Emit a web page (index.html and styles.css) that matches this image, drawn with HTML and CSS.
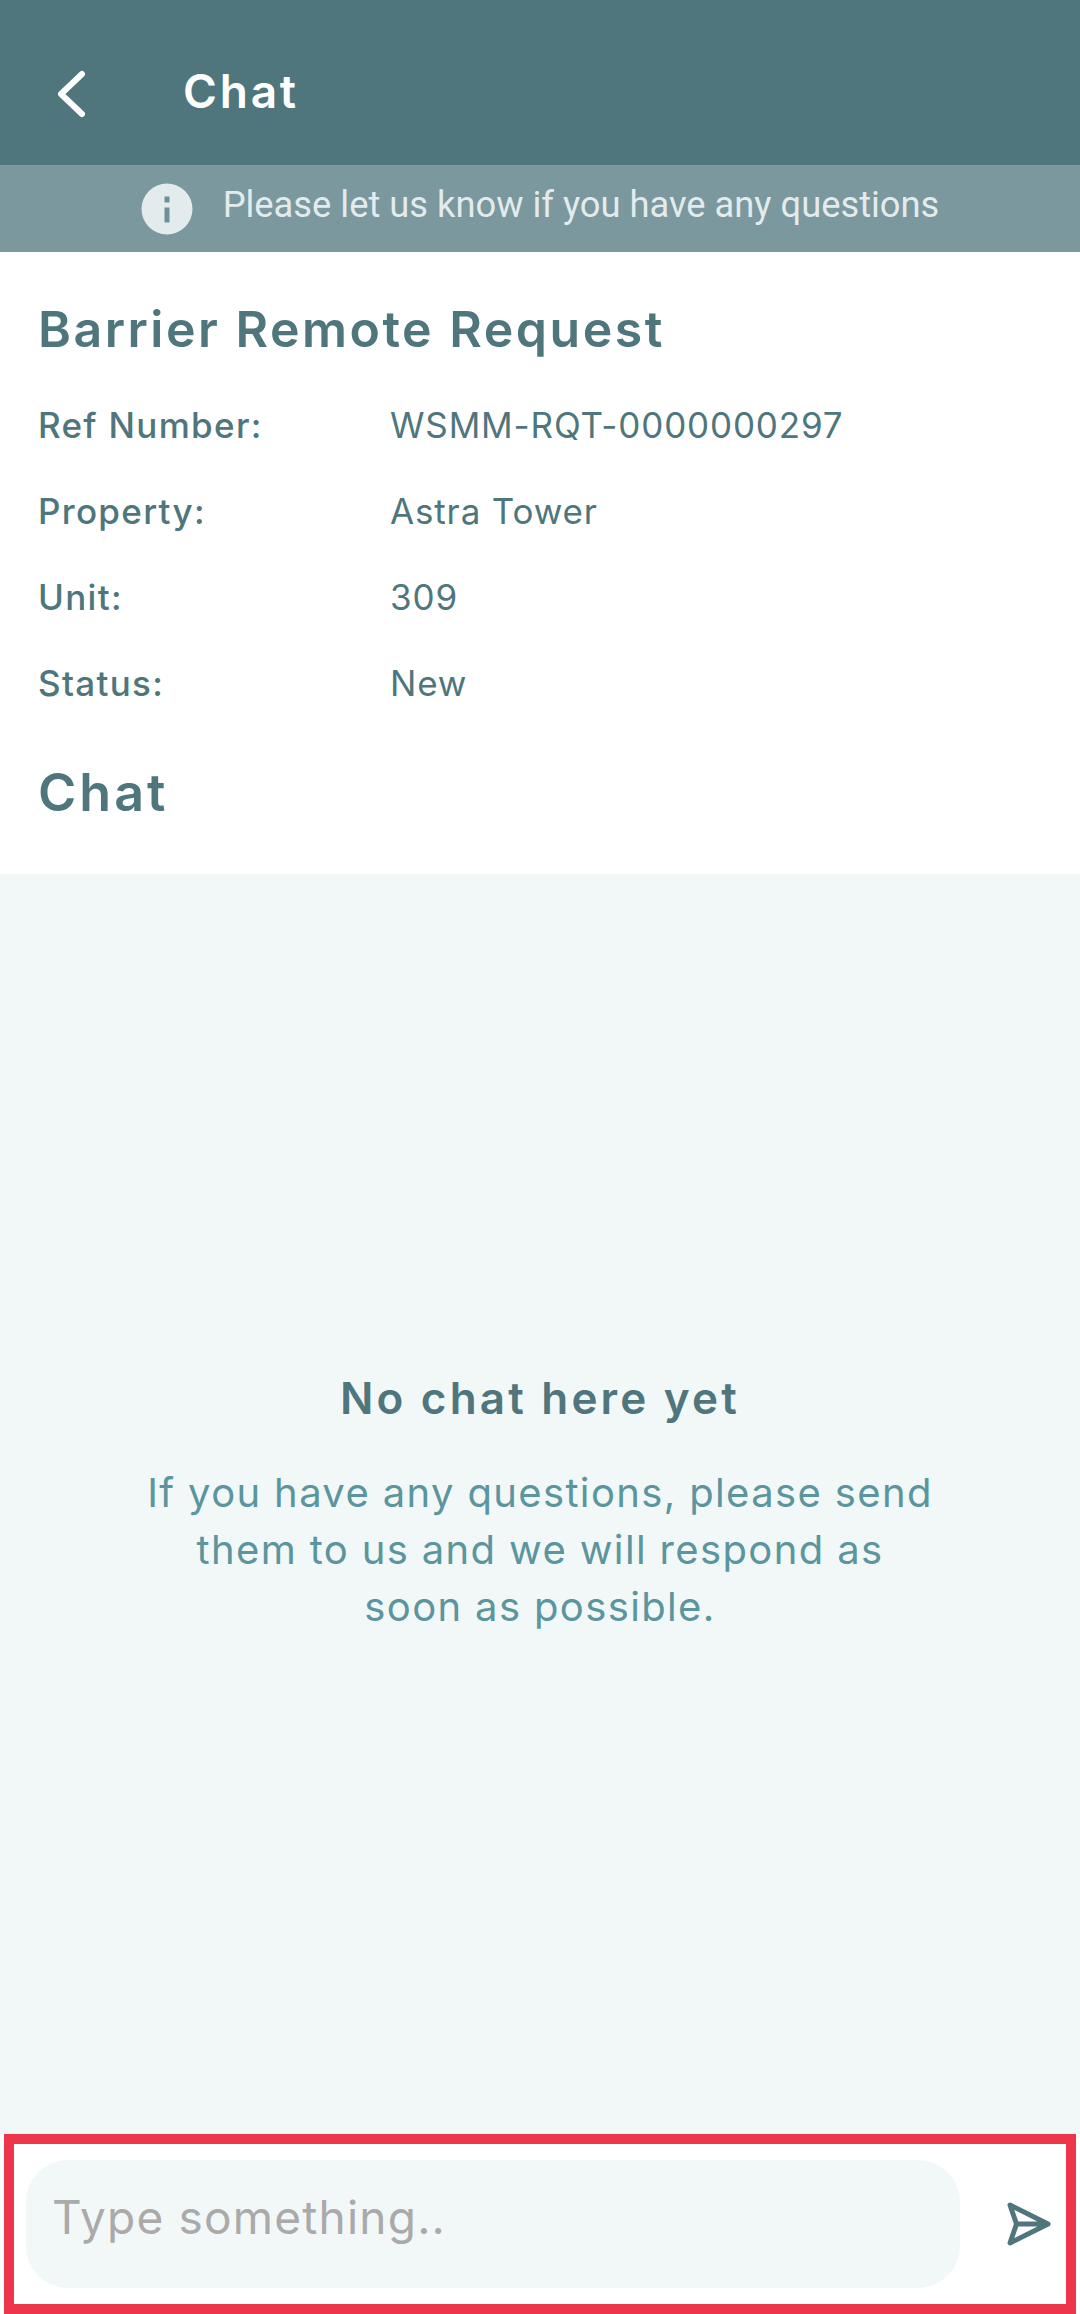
FILE: index.html
```html
<!DOCTYPE html>
<html lang="en">
<head>
    <title>Chat</title>
    <meta charset="UTF-8">
    <meta name="viewport" content="width=device-width, initial-scale=1.0">
    <link rel="stylesheet" href="styles.css">
</head>

<body>
    <div class="chat-page">
        <header class="top-bar">
            <svg class="back-icon" width="32" height="48" viewBox="0 0 32 48">
                <path d="M27 4 L6 24 L27 44" fill="none" stroke="#fff" stroke-width="6" stroke-linecap="round" stroke-linejoin="round"/>
            </svg>
            <h1>Chat</h1>
        </header>

        <div class="notice-bar">
            <svg class="info-icon" width="52" height="52" viewBox="0 0 52 52">
                <circle cx="26" cy="26" r="25.5" fill="#e4ebec"/>
                <rect x="23.5" y="13.5" width="5" height="6" fill="#6f9096"/>
                <rect x="23.5" y="24.5" width="5" height="15" fill="#6f9096"/>
            </svg>
            <p>Please let us know if you have any questions</p>
        </div>

        <section class="request-info">
            <h2>Barrier Remote Request</h2>
            <div class="info-row">
                <span class="info-label">Ref Number:</span>
                <span class="info-value">WSMM-RQT-0000000297</span>
            </div>
            <div class="info-row">
                <span class="info-label">Property:</span>
                <span class="info-value">Astra Tower</span>
            </div>
            <div class="info-row">
                <span class="info-label">Unit:</span>
                <span class="info-value">309</span>
            </div>
            <div class="info-row">
                <span class="info-label">Status:</span>
                <span class="info-value">New</span>
            </div>
            <h2 class="chat-title">Chat</h2>
        </section>

        <section class="empty-chat">
            <h3>No chat here yet</h3>
            <p>If you have any questions, please send them to us and we will respond as soon as possible.</p>
        </section>

        <footer class="message-bar">
            <div class="message-input">Type something..</div>
            <svg class="send-icon" width="44" height="44" viewBox="0 0 44 44">
                <path d="M3 3 L41 22 L3 41 L9.5 22 Z M9.5 22 H41" fill="none" stroke="#4f767c" stroke-width="5" stroke-linejoin="round" stroke-linecap="round"/>
            </svg>
        </footer>
    </div>
</body>

</html>
```

FILE: styles.css
```css
body {
    font-family: 'Inter', 'Noto Sans', sans-serif;
    margin: 0;
    padding: 0;
    background-color: #fff;
}

.chat-page {
    display: flex;
    flex-direction: column;
    height: 2314px;
}

.top-bar {
    display: flex;
    align-items: center;
    height: 165px;
    padding: 22px 0 0 55px;
    box-sizing: border-box;
    background-color: #4f767c;
}

.top-bar h1 {
    margin: 0 0 6px 96px;
    font-size: 46px;
    font-weight: 600;
    letter-spacing: 2.8px;
    color: #fff;
}

.notice-bar {
    display: flex;
    align-items: center;
    justify-content: center;
    gap: 30px;
    height: 87px;
    background-color: #7a989d;
}

.notice-bar p {
    margin: 0 0 8px 0;
    font-family: 'Roboto', sans-serif;
    font-size: 36.3px;
    color: #e4ebec;
}

.request-info {
    padding: 0 38px;
    height: 622px;
    box-sizing: border-box;
    color: #4f767c;
}

.request-info h2 {
    margin: 0;
    padding-top: 47px;
    font-size: 50px;
    line-height: 60px;
    font-weight: 600;
    letter-spacing: 2.5px;
}

.info-row {
    display: flex;
    align-items: center;
    height: 86px;
    font-size: 35px;
}

.info-row:first-of-type {
    margin-top: 23px;
}

.info-label {
    width: 352px;
    font-weight: 500;
    letter-spacing: 1.3px;
}

.info-value {
    letter-spacing: 0.85px;
}

.request-info .chat-title {
    padding-top: 37px;
    font-size: 52px;
    letter-spacing: 3px;
}

.empty-chat {
    flex: 1;
    display: flex;
    flex-direction: column;
    align-items: center;
    background-color: #f2f8f8;
    text-align: center;
}

.empty-chat h3 {
    margin: 0;
    padding-top: 494px;
    font-size: 44px;
    line-height: 60px;
    font-weight: 600;
    letter-spacing: 3.2px;
    color: #4f767c;
}

.empty-chat p {
    margin: 0;
    padding-top: 36px;
    width: 795px;
    font-size: 40px;
    line-height: 57px;
    letter-spacing: 1.36px;
    color: #5b959e;
}

.message-bar {
    display: flex;
    align-items: center;
    height: 180px;
    margin: 0 4px;
    padding: 0 15px 0 12px;
    box-sizing: border-box;
    gap: 47px;
    border: 10px solid #ed364b;
    background-color: #fff;
}

.message-input {
    flex: 1;
    height: 128px;
    display: flex;
    align-items: center;
    box-sizing: border-box;
    padding: 0 0 14px 26px;
    border-radius: 42px;
    background-color: #f2f8f8;
    font-size: 46px;
    letter-spacing: 1.2px;
    color: #aaa;
}

.send-icon {
    flex-shrink: 0;
}
```
